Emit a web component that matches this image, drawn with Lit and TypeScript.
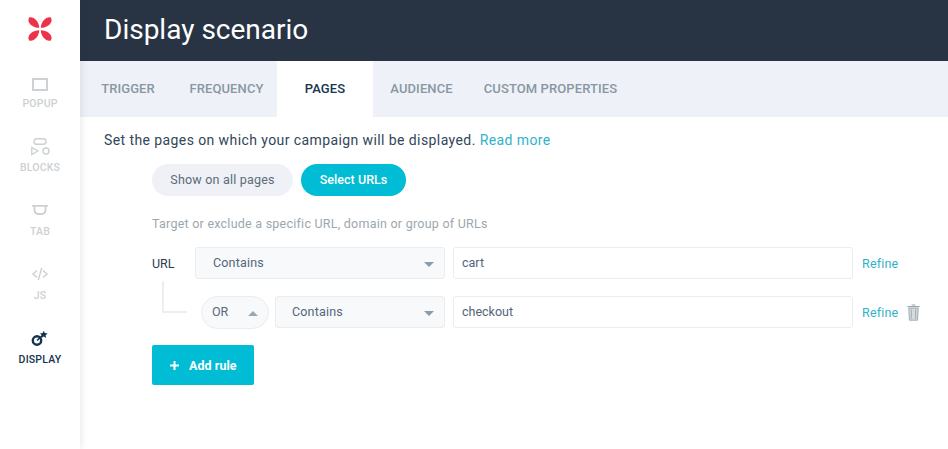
import { LitElement, css, html, svg } from "lit";
import { customElement } from "lit/decorators.js";

const icons: Record<string, unknown> = {
  popup: svg`<rect x="5" y="6" width="14" height="11" fill="none" stroke="currentColor" stroke-width="2"/>`,
  blocks: svg`<rect x="6" y="1.7" width="12" height="5.6" rx="2.5" fill="none" stroke="currentColor" stroke-width="1.4"/>
    <path d="M3.8 10.5v7l6-3.5z" fill="none" stroke="currentColor" stroke-width="1.4"/>
    <circle cx="18" cy="14" r="3" fill="none" stroke="currentColor" stroke-width="1.4"/>`,
  tab: svg`<path d="M4 4.8h16M6.5 5v4q0 4 4 4h3q4 0 4-4V5" fill="none" stroke="currentColor" stroke-width="1.8"/>`,
  js: svg`<path d="M9 5.5L5 9l4 3.5M15 5.5l4 3.5-4 3.5M13.7 3l-3.4 12" fill="none" stroke="currentColor" stroke-width="1.4"/>`,
  display: svg`<circle cx="9" cy="11.5" r="4.2" fill="none" stroke="currentColor" stroke-width="2.4"/>
    <path d="M9 11.5l7-6.5" stroke="currentColor" stroke-width="1.7"/>
    <path d="M15.8 1.8l1 2.3 2.8.4-2 1.8.5 2.6-2.3-1.3-2.4 1.3.5-2.6-2-1.8 2.8-.4z" fill="currentColor"/>`,
};

@customElement("app-root")
export class AppRoot extends LitElement {
  static styles = css`
    :host {
      display: flex;
      height: 449px;
      overflow: hidden;
      background: #fff;
      font-family: Roboto, "Liberation Sans", sans-serif;
      color: #31465a;
    }
    .side {
      width: 80px;
      flex: none;
      box-shadow: 0 0 8px rgba(40, 50, 63, 0.14);
      z-index: 1;
      display: flex;
      flex-direction: column;
      align-items: center;
    }
    .logo {
      margin-top: 17px;
      width: 24px;
      height: 24px;
      margin-bottom: 32px;
    }
    .nav {
      height: 64px;
      width: 100%;
      display: flex;
      flex-direction: column;
      align-items: center;
      color: #ccd1d3;
      font-size: 10.5px;
      font-weight: 500;
      letter-spacing: 0.2px;
    }
    .nav svg {
      width: 24px;
      height: 23px;
      display: block;
      margin-bottom: 1px;
    }
    .nav.on {
      color: #14344f;
    }
    .main {
      flex: 1;
      min-width: 0;
    }
    .head {
      height: 61px;
      background: #283444;
      color: #fff;
      font-size: 28px;
      padding-left: 24px;
      line-height: 59px;
    }
    .tabs {
      height: 56px;
      background: #eef1f7;
      display: flex;
      font-size: 13px;
      font-weight: 500;
      color: #8897a2;
      letter-spacing: 0.1px;
    }
    .tab {
      line-height: 55px;
      text-align: center;
    }
    .tab.on {
      background: #fff;
      color: #14344f;
    }
    .desc {
      margin: 14px 0 0 24px;
      font-size: 14px;
      line-height: 18px;
      letter-spacing: 0.41px;
    }
    .desc a {
      color: #2fb3c9;
    }
    .body {
      padding-left: 72px;
    }
    .pills {
      display: flex;
      gap: 8px;
      margin-top: 15px;
    }
    .pill {
      height: 32px;
      line-height: 31px;
      border-radius: 16px;
      font-size: 12.5px;
      text-align: center;
      background: #eff1f6;
      color: #5b6b78;
      letter-spacing: 0.2px;
    }
    .pill.on {
      background: #00bcd4;
      color: #fff;
      font-weight: 500;
      letter-spacing: 0.05px;
    }
    .hint {
      margin-top: 20px;
      font-size: 12.5px;
      line-height: 16px;
      color: #9ba7af;
      letter-spacing: 0.24px;
    }
    .row {
      display: flex;
      align-items: center;
      height: 32px;
    }
    .row1 {
      margin-top: 15px;
    }
    .row2 {
      margin-top: 17px;
    }
    .url {
      width: 43px;
      font-size: 12.5px;
      color: #2b3c4d;
    }
    .sel {
      position: relative;
      box-sizing: border-box;
      height: 32px;
      background: #f7f9fb;
      border: 1px solid #e9edf0;
      border-radius: 3px;
      padding-left: 17px;
      font-size: 12.5px;
      line-height: 29px;
      color: #52667a;
      letter-spacing: 0.18px;
      flex: none;
    }
    .sel.short {
      padding-left: 16px;
    }
    .sel::after {
      content: "";
      position: absolute;
      right: 10px;
      top: 14px;
      border: 5px solid transparent;
      border-top: 5px solid #8d9ba6;
      border-bottom: 0;
    }
    .input {
      box-sizing: border-box;
      width: 400px;
      height: 32px;
      margin-left: 8px;
      border: 1px solid #e9edf0;
      border-radius: 3px;
      padding-left: 8px;
      font-size: 12.5px;
      line-height: 29px;
      color: #52667a;
      flex: none;
    }
    .refine {
      margin-left: 9px;
      font-size: 12.5px;
      color: #2fb3c9;
      letter-spacing: 0.2px;
    }
    .link {
      box-sizing: border-box;
      width: 25px;
      height: 32px;
      align-self: flex-start;
      margin: -15px 14px 0 10px;
      border-left: 2px solid #eceef0;
      border-bottom: 2px solid #eceef0;
      flex: none;
    }
    .or {
      position: relative;
      box-sizing: border-box;
      width: 68px;
      height: 33px;
      border: 1px solid #e9edf0;
      border-radius: 17px;
      background: #f7f9fb;
      padding-left: 10px;
      font-size: 12.5px;
      line-height: 30px;
      color: #5b6b78;
      margin-right: 6px;
      flex: none;
    }
    .or::after {
      content: "";
      position: absolute;
      right: 10px;
      top: 14px;
      border: 5px solid transparent;
      border-bottom: 5px solid #9aa8b3;
      border-top: 0;
    }
    .trash {
      width: 13px;
      height: 17px;
      margin-left: 9px;
      color: #9aa5ad;
      flex: none;
    }
    .add {
      margin-top: 17px;
      width: 102px;
      height: 40px;
      background: #00bcd4;
      border-radius: 2px;
      color: #fff;
      font-size: 12.5px;
      font-weight: 700;
      letter-spacing: 0.05px;
      display: flex;
      align-items: center;
      padding-left: 18px;
      box-sizing: border-box;
      gap: 10px;
    }
    .add svg {
      width: 9px;
      height: 9px;
    }
  `;

  render() {
    const nav = [
      ["popup", "POPUP"],
      ["blocks", "BLOCKS"],
      ["tab", "TAB"],
      ["js", "JS"],
      ["display", "DISPLAY"],
    ];
    const tabs = [
      ["TRIGGER", 96, ""],
      ["FREQUENCY", 101, ""],
      ["PAGES", 96, "on"],
      ["AUDIENCE", 97, ""],
      ["CUSTOM PROPERTIES", 161, ""],
    ];
    return html`
      <div class="side">
        <svg class="logo" viewBox="0 0 24 24">
          <g fill="#ee3348">
            <path d="M1.2 0.6C5-1 11 4 11.2 10.8 5 11-2 5.5 1.2 0.6z" />
            <path d="M22.8 0.6C19-1 13 4 12.8 10.8 19 11 26 5.5 22.8 0.6z" />
            <path d="M1.2 23.4C5 25 11 20 11.2 13.2 5 13-2 18.5 1.2 23.4z" />
            <path d="M22.8 23.4C19 25 13 20 12.8 13.2 19 13 26 18.5 22.8 23.4z" />
          </g>
        </svg>
        ${nav.map(
          ([k, label]) => html`<div class="nav ${k === "display" ? "on" : ""}">
            <svg viewBox="0 0 24 23">${icons[k]}</svg>${label}
          </div>`
        )}
      </div>
      <div class="main">
        <div class="head">Display scenario</div>
        <div class="tabs">
          ${tabs.map(
            ([t, w, c]) => html`<div class="tab ${c}" style="width:${w}px">${t}</div>`
          )}
        </div>
        <div class="desc">
          Set the pages on which your campaign will be displayed. <a>Read more</a>
        </div>
        <div class="body">
          <div class="pills">
            <div class="pill" style="width:141px">Show on all pages</div>
            <div class="pill on" style="width:105px">Select URLs</div>
          </div>
          <div class="hint">Target or exclude a specific URL, domain or group of URLs</div>
          <div class="row row1">
            <div class="url">URL</div>
            <div class="sel" style="width:250px">Contains</div>
            <div class="input">cart</div>
            <div class="refine">Refine</div>
          </div>
          <div class="row row2">
            <div class="link"></div>
            <div class="or">OR</div>
            <div class="sel short" style="width:170px">Contains</div>
            <div class="input">checkout</div>
            <div class="refine">Refine</div>
            <svg class="trash" viewBox="0 0 13 17">
              <path d="M4.5 1h4M0.5 2.6h12" stroke="currentColor" stroke-width="1.2" fill="none" />
              <path d="M1.8 4.2h9.4l-.6 12H2.4z" fill="#d5dbdf" stroke="currentColor" stroke-width=".9" />
              <path d="M4.3 5.5v9.5M8.7 5.5v9.5" stroke="currentColor" stroke-width=".9" />
            </svg>
          </div>
          <div class="add">
            <svg viewBox="0 0 9 9"><path d="M4.5 0v9M0 4.5h9" stroke="#fff" stroke-width="2" /></svg>
            Add rule
          </div>
        </div>
      </div>
    `;
  }
}
